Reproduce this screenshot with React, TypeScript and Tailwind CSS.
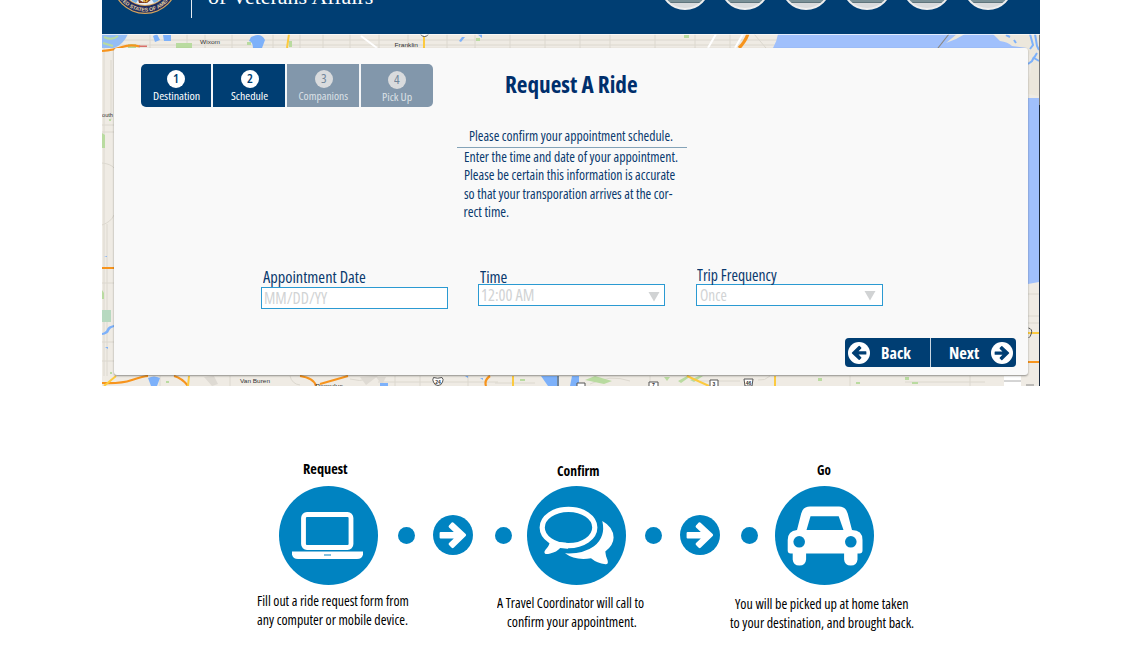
import { useLayoutEffect, useRef, type ReactNode } from "react";

/** A single line of condensed text, squeezed horizontally to a given width. */
function Fit({ width, className = "", children }: { width: number; className?: string; children: ReactNode }) {
  const inner = useRef<HTMLSpanElement>(null);
  useLayoutEffect(() => {
    const el = inner.current;
    if (el) el.style.transform = `scaleX(${width / el.offsetWidth})`;
  }, [width, children]);
  return (
    <span className={`block whitespace-nowrap ${className}`} style={{ width }}>
      <span ref={inner} className="inline-block origin-left align-top">
        {children}
      </span>
    </span>
  );
}

function MapBackdrop() {
  return (
    <svg className="absolute inset-0 h-full w-full" viewBox="102 0 938 386" aria-hidden="true">
      <rect x="102" y="0" width="938" height="386" fill="#efebe4" />
      {/* street grid */}
      <g stroke="#dcd8cf" strokeWidth="1" fill="none">
        <path d="M102 40H780M102 45H780M150 34v14M187 34v14M205 34v14M232 34v14M273 34v14M300 34v14M323 34v14M350 34v14M379 34v14M408 34v14M447 34v14M475 34v14M510 34v14M545 34v14M580 34v14M610 34v14M655 34v14M695 34v14M730 34v14M754 34l12 14" />
        <path d="M104 48V376M111 60v60M102 125h12M102 132h12M102 163q9 1 12 5M102 225q9-3 12-10M107 224v152M102 283h12M102 342h12M102 361h12" />
        <path d="M160 376v10M230 376v10M290 376q2 8 10 9M350 379q10 3 18 0M378 382h120M395 376v10M420 376v10M468 376v10M495 383h40M590 384q20-10 40-3M650 376v10M700 381h40M770 376q-5 5-12 4M850 376v10M905 382h80M970 376v10M1028 294h12M1028 316h12M1028 323h12" />
      </g>
      <g stroke="#fff" strokeWidth="2" fill="none">
        <path d="M361 36l16 12M716 34l-8 14M743 34l-8 14" />
      </g>
      {/* parks */}
      <g fill="#b9dba0">
        <path d="M176 43h16v5h-16zM128 44h8v4h-8zM247 42h4v3h-4zM289 41h3v6h-3zM102 133l3 2v13h-3zM476 38h4v3h-4zM684 35h5v3h-5zM102 290l2 3v6h-2zM109 119h2v2h-2zM110 372h2v2h-2zM166 381h3v2h-3zM585 380l10-4 17 5-8 3zM664 377h6l-3 4zM678 381l9-5h4l-10 7zM690 380l9-4h4l-9 6zM818 378h4v3h-4zM856 382h4v2h-4zM905 377h4v3h-4zM912 382h6v2h-6zM520 379h5v2h-5z" />
        <path d="M102 310h9v12h-9z" fill="#b7d9c0" />
        <path d="M204 377l10-1 4 8-6 2zM360 377l18-1-12 9zM376 377h10l-4 8z" fill="#dedad3" />
      </g>
      {/* water */}
      <g fill="#a0c0fc">
        <path d="M778 34h262v14H773q4-7 5-14zM1028 98h11v184l-11 2z" />
        <path d="M102 34h26q-5 11-14 14h-12z" fill="#94bdf6" />
        <path d="M153 36l4-2 3 6-5 2zM163 35h8v6h-7zM251 37q10-5 14 3l-3 8h-9q0-6-4-7zM459 41l3-4h3l-4 5zM477 34h5v4zM102 333q4-1 5-4t7-4v2q-4 1-5 4t-7 4zM148 378q6-3 12 0l-3 8h-6zM541 376h16v10h-9zM572 376h7v10h-9zM380 383h8v3h-8zM465 376h3v2zM104 256h3v1zM105 347h3v2zM480 378h3v2z" fill="#7db1fa" />
      </g>
      <path d="M104 37q8 4 14-1M103 43l10 3" stroke="#b9dba0" strokeWidth="2" fill="none" />
      <path d="M993 34h46v62l-11-2V80q4-9 3-18-1-8-4-14l-15-2q-4-4-12-5zM957 34h8l-9 5-10 4z" fill="#ece7dc" />
      <path d="M1030 34l3 11-3 4M1035 34l2 12 2 4M1037 53l-3 5 5 3M1028 64l4-3 2-4M1006 35l4 2M1014 40l2 3" stroke="#7db1fa" strokeWidth="2" fill="none" />
      <path d="M949 34l-11 14" stroke="#8b8782" strokeWidth="1.2" />
      {/* highways */}
      <g stroke="#f7941d" strokeWidth="2.2" fill="none">
        <path d="M102 51q12-1 20-4t18-.5" />
        <path d="M748 34q-3 8-9 14" strokeWidth="3.2" />
        <path d="M102 268h12M102 383q18 1 30-3t16-4M174 376q8 2 14 10M300 376q14 2 16 10M320 384l28-8M490 376q-6 4-4 10M1028 362h12" />
      </g>
      <g stroke="#fcca3f" strokeWidth="2" fill="none">
        <path d="M289 34l-2 14M424 36v12M116 376l-12 10M189 376l-1 10M513 376v10M687 376l22 10M775 376v10M1028 333h12" />
      </g>
      <path d="M558 376v10" stroke="#72869c" strokeWidth="2" />
      <path d="M139 45.500h8v1.500h-8z" fill="#d9706a" />
      {/* route shields */}
      <g fill="#fff" stroke="#555" strokeWidth="1">
        <path d="M433.500 377.500q4 1.500 8.500 0 2 2 .5 4.500-1 3.500-4.500 3.500t-4.500-3.500q-1.500-2 0-4.500zM577 383h8v4h-8zM649 382h9v5h-9zM710 380h8v7h-8zM744 379h9l-1 7h-7z" />
        <circle cx="424.500" cy="32" r="4.500" />
        <path d="M1028.500 328q4 1 3 5t-3 5" fill="none" />
      </g>
      <g fill="#333" fontFamily="Liberation Sans, sans-serif">
        <text x="200" y="44" fontSize="6" textLength="20" lengthAdjust="spacingAndGlyphs">Wixom</text>
        <text x="394.500" y="47" fontSize="6" textLength="23.500" lengthAdjust="spacingAndGlyphs">Franklin</text>
        <text x="240" y="382.500" fontSize="6" textLength="30" lengthAdjust="spacingAndGlyphs">Van Buren</text>
        <text x="315" y="388" fontSize="6" textLength="28" lengthAdjust="spacingAndGlyphs">Romulus</text>
        <text x="102" y="117" fontSize="6" textLength="11" lengthAdjust="spacingAndGlyphs">outh</text>
        <text x="435.300" y="383.500" fontSize="5" fontWeight="700">24</text>
        <text x="745.700" y="384.500" fontSize="5" fontWeight="700">46</text>
        <text x="712.500" y="385.500" fontSize="5" fontWeight="700">3</text>
        <text x="652" y="387" fontSize="5" fontWeight="700">7</text>
      </g>
      <path d="M1004 376h17v10h-17z" fill="#fff" />
      <path d="M1004 381h17" stroke="#aaa" />
      <path d="M1026 385h8" stroke="#888" />
      <path d="M1039.500 34v71" stroke="#777" />
      <path d="M1039.500 105v281" stroke="#1b2a3d" />
    </svg>
  );
}

function Seal() {
  return (
    <svg className="h-[68px] w-[68px]" viewBox="-34 -34 68 68" aria-hidden="true">
      <circle r="33" fill="#d9a65c" />
      <circle r="31.800" fill="#1d2c60" />
      <circle r="25" fill="#d9a65c" />
      <circle r="24" fill="#e9edf0" />
      <path d="M-19 13q6-2 12 6l-2 3-4-2zM19 13q-6-2-12 6l2 3 4-2z" fill="#76aee0" />
      <path d="M-7 18l5 3 4-4 5 1-5 4-8 0z" fill="#7d3a22" />
      <path d="M-3 17l3 4M4 17l-3 4" stroke="#e5b53c" strokeWidth="1.500" />
      <path id="seal-arc" d="M-30.500 0A30.500 30.500 0 0 0 30.500 0" fill="none" />
      <text fill="#e3cfa0" fontSize="5.200" fontWeight="700" fontFamily="Liberation Sans, sans-serif" textAnchor="middle">
        <textPath href="#seal-arc" startOffset="50%">UNITED STATES OF AMERICA</textPath>
      </text>
    </svg>
  );
}

function Header() {
  return (
    <header className="relative flex h-[34px] items-start overflow-hidden bg-[#003e73] shadow-[0_1px_0_#ffffffb0]">
      <div className="-mt-[53px] ml-[9px] shrink-0">
        <Seal />
      </div>
      <div className="ml-[11.500px] h-[18px] w-[1.500px] shrink-0 bg-[#e6ecf2]" />
      <Fit width={165} className="-mt-[15px] ml-4 font-['Liberation_Serif',serif] text-[22px] leading-6 text-white">
        of Veterans Affairs
      </Fit>
      <nav className="-mt-10 ml-[286.500px] flex gap-[10.700px]">
        {[0, 1, 2, 3, 4, 5].map((i) => (
          <span key={i} className="block h-[50px] w-[50px] overflow-hidden rounded-full border-2 border-[#eeeeee] bg-[#d9dbdd]">
            <span className="block h-[41px] rounded-b-md border-b border-[#5f747b] bg-[#7a9097]" />
          </span>
        ))}
      </nav>
    </header>
  );
}

function Step({ n, label, width, active, className }: { n: number; label: string; width: number; active: boolean; className: string }) {
  return (
    <li className={`flex h-[43px] flex-col items-center pt-[6px] ${active ? "bg-[#003e73]" : "bg-[#8297ab]"} ${className}`}>
      <span
        className={`flex h-[18px] w-[18px] items-center justify-center rounded-full text-[12px] leading-none ${
          active ? "bg-white font-semibold text-[#003e73]" : "bg-[#d9dbdd] font-medium text-[#71869a]"
        }`}
      >
        <Fit width={5.5}>{n}</Fit>
      </span>
      <Fit width={width} className={`text-[11.500px] leading-4 font-medium ${active ? "text-white" : "text-[#dce1e6]"}`}>
        {label}
      </Fit>
    </li>
  );
}

function Arrow({ className }: { className: string }) {
  return (
    <svg className={className} viewBox="0 0 40 40" aria-hidden="true">
      <circle cx="20" cy="20" r="20" fill="currentColor" />
      <path
        d="M7.600 17.100h13.200l-4.800-4.600q-.9-1 0-2l2.700-2.900q.9-.8 1.900.1L32.700 19q.9 1 0 2L20.600 32.800q-1 .9-1.900 0L16 30q-.9-1 0-2l4.800-4.600H7.600q-1 0-1-1v-4.300q0-1 1-1z"
        className="fill-(--arrow)"
      />
    </svg>
  );
}

const Triangle = () => (
  <svg className="h-[10px] w-[12px]" viewBox="0 0 12 10" aria-hidden="true">
    <path d="M.5 0h11L6 9.500z" fill="#d1d3d4" />
  </svg>
);

const box = "flex h-[22px] w-[187px] border-[1.500px] border-[#2b9ad2] bg-white text-[17px] leading-5 text-[#d1d3d4]";

function RideForm() {
  return (
    <section className="relative mt-[14px] ml-[12px] flex h-[327px] w-[914px] flex-col rounded-[3px] bg-[#f9f9f9] font-medium text-[#0a3a6e] shadow-[0_1px_2px_rgba(0,0,0,0.4)]">
      <div className="flex h-[76px] items-start pt-4 pl-[27px]">
        <ol className="flex gap-[2px] overflow-hidden rounded-[5px] bg-[#f4f6f8]">
          <Step n={1} label="Destination" width={47} active className="w-[70px]" />
          <Step n={2} label="Schedule" width={37} active className="w-[72px] pl-px" />
          <Step n={3} label="Companions" width={50} active={false} className="w-[72px] pl-px" />
          <Step n={4} label="Pick Up" width={30} active={false} className="w-[72px] pt-[7px]" />
        </ol>
        <h1 className="mt-[6px] ml-[71.500px] font-bold text-[#002f6c]">
          <Fit width={132} className="text-[23px] leading-7">Request A Ride</Fit>
        </h1>
      </div>

      <div className="ml-[343px] w-[230px] pt-[3px] text-[14px]">
        <div className="border-b border-[#84a3b8] pb-[2px] pl-[11.500px]">
          <Fit width={204} className="leading-[18px]">Please confirm your appointment schedule.</Fit>
        </div>
        <div className="-mt-[0.500px] pl-[6.500px] leading-[18.500px]">
          <Fit width={214}>Enter the time and date of your appointment.</Fit>
          <Fit width={211}>Please be certain this information is accurate</Fit>
          <Fit width={208}>so that your transporation arrives at the cor-</Fit>
          <Fit width={46}>rect time.</Fit>
        </div>
      </div>

      <div className="mt-[42.500px] ml-[147px] flex items-start">
        <div className="pt-[3px]">
          <Fit width={103} className="ml-[2px] h-5 text-[17px] leading-5">Appointment Date</Fit>
          <div className={`${box} pl-[2px] font-normal`}>
            <Fit width={63}>MM/DD/YY</Fit>
          </div>
        </div>
        <div className="ml-[30px] pt-[3px]">
          <Fit width={27} className="ml-[2px] h-[17px] text-[17px] leading-5">Time</Fit>
          <div className={`${box} justify-between pr-1 pl-[2px] font-normal`}>
            <Fit width={53}>12:00 AM</Fit>
            <span className="pt-[7px]"><Triangle /></span>
          </div>
        </div>
        <div className="ml-[31px]">
          <Fit width={80} className="ml-px h-5 pt-px text-[17px] leading-5">Trip Frequency</Fit>
          <div className={`${box} justify-between pr-[6px] pl-[3px] font-normal`}>
            <Fit width={27}>Once</Fit>
            <span className="pt-[6px]"><Triangle /></span>
          </div>
        </div>
      </div>

      <div className="mt-auto mr-3 mb-2 flex h-[29px] gap-px self-end overflow-hidden rounded bg-[#c9d6e2] text-[16px] font-bold text-white [--arrow:#003e73]">
        <button className="flex w-[85px] items-center bg-[#003e73] pl-[3px]">
          <Arrow className="h-[22px] w-[22px] rotate-180" />
          <Fit width={30} className="ml-[11px] leading-5">Back</Fit>
        </button>
        <button className="flex w-[85px] items-center bg-[#003e73] pl-[18px]">
          <Fit width={30} className="leading-5">Next</Fit>
          <Arrow className="ml-[12px] h-[22px] w-[22px]" />
        </button>
      </div>
    </section>
  );
}

function LaptopIcon() {
  return (
    <svg className="block h-[99px] w-[99px]" viewBox="279 485.500 99 99" aria-hidden="true">
      <circle cx="328.500" cy="535" r="49.500" fill="#0083c1" />
      <rect x="303.500" y="514" width="47.500" height="33" rx="3.500" fill="none" stroke="#fff" strokeWidth="4.800" />
      <path d="M292 551h71v3.200q-1 4.200-6 4.200h-59q-5 0-6-4.200z" fill="#fff" />
      <path d="M324 554.500h7" stroke="#0083c1" />
    </svg>
  );
}

function ChatIcon() {
  return (
    <svg className="block h-[99px] w-[99px]" viewBox="527 485.500 99 99" aria-hidden="true">
      <circle cx="576.500" cy="535" r="49.500" fill="#0083c1" />
      <ellipse cx="568.500" cy="527" rx="26.300" ry="18.200" fill="none" stroke="#fff" strokeWidth="5.200" />
      <path d="M549.500 540q.8 4.500-4 9.300-2 2.500-.3 4 1 .7 5-.3 6.500-1.500 10-5.500l8 .8-2-6-9.500-1-2.500 2q-1 .5-.7-1.500z" fill="#fff" />
      <path d="M602.300 520.500q11 6 11.300 16.500 0 7.500-8.300 14 .3 4.500 2.200 8.500 1.300 4.500-2 4.300-8.500-1-14.500-6-16 2.500-26-5 18 1 29-7 12-9.500 8.300-25.300z" fill="#fff" />
    </svg>
  );
}

function CarIcon() {
  return (
    <svg className="block h-[99px] w-[99px]" viewBox="774.500 485.500 99 99" aria-hidden="true">
      <circle cx="824" cy="535" r="49.500" fill="#0083c1" />
      <path
        d="M796.500 529.600l4.200-16.600q1.600-7 8.800-7h29q7 0 8.700 7l4.300 16.600q10.500 0 10.500 10v10.400q0 3-3 3h-2v6q-.5 6-6.700 6t-6.700-6v-6h-38v6q-.5 6-6.700 6t-6.700-6v-6h-2q-3 0-3-3v-10.400q0-9 9.300-10z"
        fill="#fff"
      />
      <path d="M810 515.700h28.200l4.800 13.800h-37z" fill="#0083c1" />
      <circle cx="798.700" cy="541.300" r="5.800" fill="#0083c1" />
      <circle cx="850.300" cy="541.300" r="5.800" fill="#0083c1" />
    </svg>
  );
}

function Connector({ className }: { className: string }) {
  return (
    <div className={`mt-[55px] flex w-[149px] items-center text-[#0083c1] [--arrow:#ffffff] ${className}`}>
      <span className="h-[17px] w-[17px] rounded-full bg-[#0083c1]" />
      <Arrow className="ml-[17.500px] h-10 w-10" />
      <span className="ml-auto h-[17px] w-[17px] rounded-full bg-[#0083c1]" />
    </div>
  );
}

function Process() {
  return (
    <section className="mt-[74px] flex items-start pl-[279px] text-[14px] font-medium text-black">
      <div className="w-[99px]">
        <Fit width={45} className="ml-6 h-[25.500px] leading-[18px] font-bold">Request</Fit>
        <LaptopIcon />
        <div className="-ml-[22px] pt-[6.500px] leading-[19px]">
          <Fit width={152}>Fill out a ride request form from</Fit>
          <Fit width={151}>any computer or mobile device.</Fit>
        </div>
      </div>
      <Connector className="pr-[15px] pl-5" />
      <div className="w-[99px]">
        <Fit width={43} className="ml-[30px] h-[25.500px] pt-[2px] leading-[18px] font-bold">Confirm</Fit>
        <ChatIcon />
        <div className="-ml-[30px] pt-[8.500px] leading-[19px]">
          <Fit width={147}>A Travel Coordinator will call to</Fit>
          <Fit width={130} className="ml-[10px]">confirm your appointment.</Fit>
        </div>
      </div>
      <Connector className="pr-[17px] pl-[19px]" />
      <div className="w-[99px]">
        <Fit width={14} className="ml-[42px] h-[25.500px] pt-px leading-[18px] font-bold">Go</Fit>
        <CarIcon />
        <div className="-ml-[45px] pt-[9.500px] leading-[19px]">
          <Fit width={174} className="ml-[5px]">You will be picked up at home taken</Fit>
          <Fit width={184}>to your destination, and brought back.</Fit>
        </div>
      </div>
    </section>
  );
}

export default function App() {
  return (
    <main className="h-[654px] w-[1140px] overflow-hidden bg-white font-['Open_Sans',sans-serif] font-stretch-75%">
      <div className="relative ml-[102px] h-[386px] w-[938px] overflow-hidden">
        <MapBackdrop />
        <Header />
        <RideForm />
      </div>
      <Process />
    </main>
  );
}
